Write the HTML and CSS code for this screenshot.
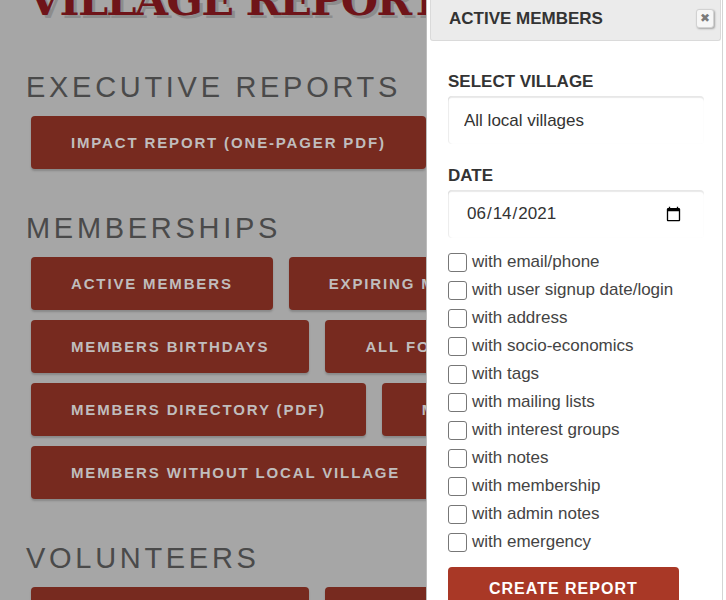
FILE: index.html
```html
<!DOCTYPE html>
<html lang="en">
<head>
  <meta charset="UTF-8">
  <meta name="viewport" content="width=device-width, initial-scale=1.0">
  <title>Village Reports</title>
  <link rel="stylesheet" href="styles.css">
</head>
<body>

  <div class="page">
    <h1 class="page-title">VILLAGE REPORTS</h1>

    <section class="report-section">
      <h2>EXECUTIVE REPORTS</h2>
      <div class="report-buttons">
        <a href="#" class="report-button">IMPACT REPORT (ONE-PAGER PDF)</a>
      </div>
    </section>

    <section class="report-section">
      <h2>MEMBERSHIPS</h2>
      <div class="report-buttons">
        <a href="#" class="report-button">ACTIVE MEMBERS</a>
        <a href="#" class="report-button">EXPIRING MEMBERSHIPS</a>
        <a href="#" class="report-button">MEMBERS BIRTHDAYS</a>
        <a href="#" class="report-button">ALL FORMER MEMBERS</a>
        <a href="#" class="report-button">MEMBERS DIRECTORY (PDF)</a>
        <a href="#" class="report-button">MEMBERS LABELS</a>
        <a href="#" class="report-button">MEMBERS WITHOUT LOCAL VILLAGE</a>
      </div>
    </section>

    <section class="report-section">
      <h2>VOLUNTEERS</h2>
      <div class="report-buttons">
        <a href="#" class="report-button">VOLUNTEER ACTIVITY</a>
        <a href="#" class="report-button">VOLUNTEER HOURS</a>
      </div>
    </section>
  </div>

  <!-- report options drawer -->
  <aside class="report-drawer">
    <div class="drawer-inner">
      <div class="drawer-header">
        <span class="drawer-title">ACTIVE MEMBERS</span>
        <button class="drawer-close" type="button">&#10006;</button>
      </div>

      <form class="drawer-body">
        <label class="field-label" for="village">SELECT VILLAGE</label>
        <select id="village" class="field-input">
          <option>All local villages</option>
        </select>

        <label class="field-label date-label" for="report-date">DATE</label>
        <input id="report-date" class="field-input" type="date" value="2021-06-14">

        <div class="option-list">
          <label class="option"><input type="checkbox"> with email/phone</label>
          <label class="option"><input type="checkbox"> with user signup date/login</label>
          <label class="option"><input type="checkbox"> with address</label>
          <label class="option"><input type="checkbox"> with socio-economics</label>
          <label class="option"><input type="checkbox"> with tags</label>
          <label class="option"><input type="checkbox"> with mailing lists</label>
          <label class="option"><input type="checkbox"> with interest groups</label>
          <label class="option"><input type="checkbox"> with notes</label>
          <label class="option"><input type="checkbox"> with membership</label>
          <label class="option"><input type="checkbox"> with admin notes</label>
          <label class="option"><input type="checkbox"> with emergency</label>
        </div>

        <button type="button" class="create-button">CREATE REPORT</button>
      </form>
    </div>
  </aside>

</body>
</html>
```

FILE: styles.css
```css
body {
  margin: 0;
  font-family: "Liberation Sans", Arial, sans-serif;
  background-color: #a6a6a6;
  overflow: hidden;
}

.page {
  padding: 0 26px;
}

.page-title {
  margin: -25px 0 0 2px;
  font-family: "DejaVu Serif", "Liberation Serif", serif;
  font-size: 43px;
  line-height: 50px;
  font-weight: bold;
  letter-spacing: -1.8px;
  color: #6f1419;
  text-shadow: 3px 3px 0 #8c8c8c;
  white-space: nowrap;
}

.report-section {
  margin-top: 45px;
}

.report-section + .report-section {
  margin-top: 42px;
}

.report-section h2 {
  margin: 0 0 12px;
  font-size: 29px;
  line-height: 34px;
  font-weight: normal;
  letter-spacing: 3.7px;
  color: #4a4a4a;
}

.report-buttons {
  display: flex;
  flex-wrap: wrap;
  gap: 10px 16px;
  padding-left: 5px;
}

.report-button {
  display: block;
  height: 53px;
  line-height: 53px;
  padding: 0 40px;
  background-color: #772a1f;
  border-radius: 4px;
  box-shadow: 0 2px 2px rgba(0, 0, 0, 0.18);
  color: #c0bdbd;
  font-size: 15px;
  font-weight: bold;
  letter-spacing: 1.85px;
  text-decoration: none;
  white-space: nowrap;
}

/* drawer */

.report-drawer {
  position: fixed;
  top: 0;
  right: 0;
  width: 300px;
  height: 100%;
  box-sizing: border-box;
  padding: 0 3px;
  background-color: white;
  border-left: 1px solid #bcbcbc;
  overflow: hidden;
}

.drawer-inner {
  height: 100%;
  border-right: 1px solid #d4d4d4;
}

.drawer-header {
  display: flex;
  align-items: flex-start;
  justify-content: space-between;
  height: 41px;
  box-sizing: border-box;
  margin-right: 1px;
  padding: 0 6px 0 18px;
  background-color: #ebebeb;
  border: 1px solid #dadada;
  border-top: none;
  border-radius: 0 0 3px 3px;
}

.drawer-title {
  margin-top: 9px;
  font-size: 17px;
  font-weight: bold;
  color: #333;
}

.drawer-close {
  width: 18px;
  height: 19px;
  margin-top: 9px;
  padding: 0;
  background-color: #f6f6f6;
  border: 1px solid #d2d2d2;
  border-radius: 3px;
  box-shadow: 1px 1px 2px rgba(0, 0, 0, 0.3);
  color: #7a7a7a;
  font-family: "DejaVu Sans", sans-serif;
  font-size: 12px;
  line-height: 17px;
  cursor: pointer;
}

.drawer-body {
  display: flex;
  flex-direction: column;
  align-items: flex-start;
  padding: 31px 18px 0;
  margin: 0;
}

.field-label {
  margin-bottom: 4px;
  font-size: 17px;
  line-height: 20px;
  font-weight: bold;
  color: #333;
}

.date-label {
  margin-top: 22px;
}

.field-input {
  width: 100%;
  height: 48px;
  box-sizing: border-box;
  margin: 0;
  padding: 0 16px;
  appearance: none;
  background-color: white;
  border: none;
  border-radius: 4px;
  box-shadow: inset 0 2px 1px rgba(0, 0, 0, 0.09), inset 1px 0 1px rgba(0, 0, 0, 0.07);
  font-family: "Liberation Sans", Arial, sans-serif;
  font-size: 17px;
  color: #333;
  outline: none;
}

input.field-input {
  padding: 0 20px 0 18px;
}

.option-list {
  margin-top: 10px;
}

.option {
  display: flex;
  align-items: center;
  height: 28px;
  font-size: 17px;
  color: #444;
}

.option input {
  appearance: none;
  width: 19px;
  height: 19px;
  margin: 1px 5px 0 0;
  border: 1px solid #777;
  border-radius: 3px;
  background-color: white;
}

.create-button {
  margin-top: 11px;
  padding: 12px 41px;
  background-color: #a93826;
  border: none;
  border-radius: 4px;
  color: white;
  font-family: "Liberation Sans", Arial, sans-serif;
  font-size: 16px;
  line-height: 20px;
  font-weight: bold;
  letter-spacing: 1px;
  cursor: pointer;
}
```
